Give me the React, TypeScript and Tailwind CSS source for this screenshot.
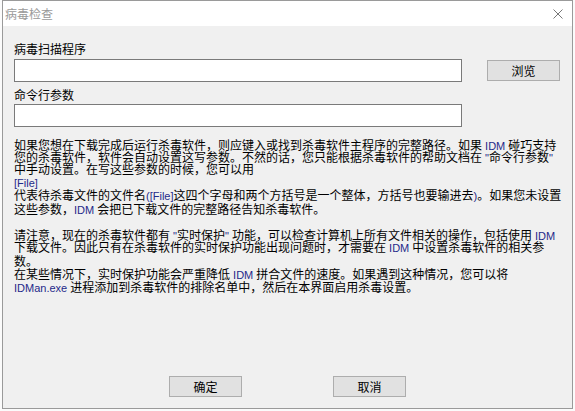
import React from "react";

const cjk = '"Noto Sans CJK SC", "Noto Sans", sans-serif';

// Latin runs inside the help text are drawn in a smaller sans face, tinted navy
function L({ children }: { children: React.ReactNode }) {
  return (
    <span className="text-[11px] text-[#1f2a8a]" style={{ fontFamily: '"Liberation Sans", Arial, sans-serif' }}>
      {children}
    </span>
  );
}

function Line({ h, children }: { h: string; children?: React.ReactNode }) {
  return <div className={`${h} leading-[12px] whitespace-nowrap`}>{children}</div>;
}

function Button({ label, className = "" }: { label: string; className?: string }) {
  return (
    <button className={`w-[73px] h-[21px] bg-[#e1e1e1] border border-[#adadad] text-[12px] leading-[12px] text-black flex items-center justify-center ${className}`}>
      {label}
    </button>
  );
}

export default function App() {
  return (
    <div className="w-[575px] h-[411px] overflow-hidden bg-[#fbfbfb]" style={{ fontFamily: cjk }}>
      <div className="ml-[2px] w-[571px] h-[409px] border border-[#9a9a9a] flex flex-col">
        {/* title bar */}
        <div className="h-[25px] bg-white flex items-start justify-between shrink-0">
          <div className="pl-[2px] pt-[7px] text-[12px] leading-[12px] text-[#9a9a9a]">病毒检查</div>
          <svg width="10" height="10" viewBox="0 0 10 10" className="mt-[8px] mr-[9px]">
            <path d="M0.5 0.5 L9.5 9.5 M9.5 0.5 L0.5 9.5" stroke="#777" strokeWidth="1" fill="none" />
          </svg>
        </div>

        {/* body */}
        <div className="flex-1 bg-[#f0f0f0] pl-[11px] flex flex-col text-[12px] text-black">
          <div className="mt-[17px] h-[12px] leading-[12px]">病毒扫描程序</div>
          <div className="mt-[4px] flex items-start">
            <div className="w-[448px] h-[23px] bg-white border border-[#7a7a7a]" />
            <Button label="浏览" className="ml-[25px] mt-[1px]" />
          </div>
          <div className="mt-[7px] h-[12px] leading-[12px]">命令行参数</div>
          <div className="mt-[3px] w-[448px] h-[23px] bg-white border border-[#7a7a7a]" />

          <div className="mt-[12px] flex flex-col">
            <Line h="h-[12px]">
              如果您想在下载完成后运行杀毒软件，则应键入或找到杀毒软件主程序的完整路径。如果<L> IDM </L>碰巧支持
            </Line>
            <Line h="h-[12px]">
              您的杀毒软件，软件会自动设置这写参数。不然的话，您只能根据杀毒软件的帮助文档在<L> "</L>命令行参数<L>"</L>
            </Line>
            <Line h="h-[13px]">中手动设置。在写这些参数的时候，您可以用</Line>
            <Line h="h-[13px]">
              <L>[File]</L>
            </Line>
            <Line h="h-[14px]">
              代表待杀毒文件的文件名<L>([File]</L>这四个字母和两个方括号是一个整体，方括号也要输进去<L>)</L>。如果您未设置
            </Line>
            <Line h="h-[13px]">
              这些参数，<L>IDM </L>会把已下载文件的完整路径告知杀毒软件。
            </Line>
            <Line h="h-[13px]" />
            <Line h="h-[12px]">
              请注意，现在的杀毒软件都有<L> "</L>实时保护<L>" </L>功能，可以检查计算机上所有文件相关的操作，包括使用<L> IDM</L>
            </Line>
            <Line h="h-[14px]">
              下载文件。因此只有在杀毒软件的实时保护功能出现问题时，才需要在<L> IDM </L>中设置杀毒软件的相关参
            </Line>
            <Line h="h-[13px]">数。</Line>
            <Line h="h-[13px]">
              在某些情况下，实时保护功能会严重降低<L> IDM </L>拼合文件的速度。如果遇到这种情况，您可以将
            </Line>
            <Line h="h-[13px]">
              <L>IDMan.exe </L>进程添加到杀毒软件的排除名单中，然后在本界面启用杀毒设置。
            </Line>
          </div>

          {/* dialog buttons */}
          <div className="mt-auto mb-[11px] pl-[155px] flex">
            <Button label="确定" />
            <Button label="取消" className="ml-[91px]" />
          </div>
        </div>
      </div>
    </div>
  );
}
